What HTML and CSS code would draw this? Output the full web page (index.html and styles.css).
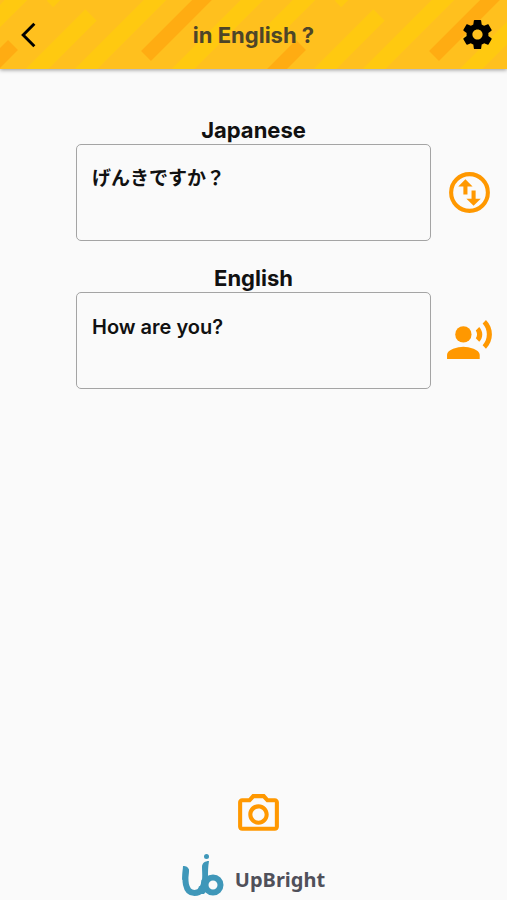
FILE: index.html
```html
<!DOCTYPE html>
<html lang="en">
<head>
<meta charset="utf-8">
<meta name="viewport" content="width=device-width, initial-scale=1">
<title>in English ?</title>
<link rel="stylesheet" href="styles.css">
</head>
<body>
<header class="bar">
  <svg class="bar-pattern" aria-hidden="true">
    <defs>
      <pattern id="stripes" width="288" height="70" patternUnits="userSpaceOnUse">
        <rect width="288" height="70" fill="#ffc01e"/>
        <g stroke="#ffc910" stroke-width="16">
          <path d="M-20 36L22 -6"/>
          <path d="M268 36L310 -6"/>
          <path d="M32 74L91 15"/>
          <path d="M81 74L161 -6"/>
          <path d="M178 74L258 -6"/>
          <path d="M50 4L60 -6" stroke-width="9"/>
        </g>
        <g stroke="#ffac12" stroke-width="14">
          <path d="M-25 83L13 45"/>
          <path d="M263 83L301 45"/>
          <path d="M146 56L210 -8"/>
        </g>
      </pattern>
    </defs>
    <rect width="100%" height="100%" fill="url(#stripes)"/>
  </svg>
  <button class="icon-button" type="button" aria-label="Back">
    <svg class="icon-small" viewBox="0 0 36 36" aria-hidden="true"><path d="M23 7L11.500 18.500L23 30" fill="none" stroke="#000" stroke-width="3"/></svg>
  </button>
  <h1 class="title">in English ?</h1>
  <button class="icon-button" type="button" aria-label="Settings">
    <svg class="icon-small" viewBox="0 0 24 24" aria-hidden="true"><path d="M19.430 12.980c.04-.32.070-.64.070-.98s-.03-.66-.07-.98l2.110-1.650c.19-.15.240-.42.120-.64l-2-3.460c-.12-.22-.39-.3-.61-.22l-2.490 1c-.52-.4-1.080-.73-1.690-.98l-.38-2.650C14.460 2.180 14.250 2 14 2h-4c-.25 0-.46.180-.49.420l-.38 2.650c-.61.250-1.170.590-1.690.980l-2.490-1c-.23-.09-.49 0-.61.220l-2 3.460c-.13.220-.07.490.120.640l2.110 1.650c-.04.320-.07.650-.07.980s.030.660.070.980l-2.110 1.650c-.19.150-.24.420-.12.640l2 3.460c.12.220.390.300.610.220l2.490-1c.52.400 1.080.730 1.690.980l.38 2.650c.03.240.240.420.490.420h4c.25 0 .46-.18.490-.42l.38-2.650c.61-.25 1.170-.59 1.690-.98l2.490 1c.23.090.490 0 .610-.22l2-3.460c.12-.22.070-.49-.12-.64l-2.110-1.650zM12 15.500c-1.930 0-3.500-1.570-3.500-3.500s1.570-3.500 3.500-3.500 3.500 1.570 3.500 3.500-1.570 3.500-3.500 3.500z"/></svg>
  </button>
</header>
<main class="fields">
  <section class="field">
    <label class="field-label" for="source">Japanese</label>
    <textarea class="field-box field-box-ja" id="source" lang="ja">げんきですか？</textarea>
    <button class="field-action" type="button" aria-label="Swap languages">
      <svg class="icon" viewBox="0 0 24 24" aria-hidden="true"><circle cx="12" cy="12" r="9" fill="none" stroke="currentColor" stroke-width="2"/><path d="M6.500 9L10 5.500L13.500 9H11v4H9V9zM17.500 15L14 18.500L10.500 15H13v-4h2v4z"/></svg>
    </button>
  </section>
  <section class="field">
    <label class="field-label" for="target">English</label>
    <textarea class="field-box" id="target">How are you?</textarea>
    <button class="field-action" type="button" aria-label="Read aloud">
      <svg class="icon" viewBox="0 0 24 24" aria-hidden="true"><circle cx="9" cy="9" r="4"/><path d="M9 15c-2.670 0-8 1.340-8 4v2h16v-2c0-2.660-5.330-4-8-4zm7.760-9.640l-1.680 1.690c.84 1.180.840 2.710 0 3.890l1.680 1.690c2.020-2.020 2.020-5.070 0-7.270zM20.070 2l-1.630 1.630c2.770 3.020 2.770 7.560 0 10.740L20.070 16c3.900-3.890 3.910-9.950 0-14z"/></svg>
    </button>
  </section>
</main>
<footer class="footer">
  <button class="camera" type="button" aria-label="Take a photo">
    <svg class="icon" viewBox="0 0 24 24" aria-hidden="true"><path d="M20 4h-3.170L15 2H9L7.170 4H4c-1.100 0-2 .9-2 2v12c0 1.100.900 2 2 2h16c1.100 0 2-.9 2-2V6c0-1.100-.9-2-2-2zm0 14H4V6h4.050l1.830-2h4.240l1.830 2H20v12zM12 7c-2.760 0-5 2.240-5 5s2.240 5 5 5 5-2.240 5-5-2.240-5-5-5zm0 8c-1.650 0-3-1.350-3-3s1.350-3 3-3 3 1.350 3 3-1.350 3-3 3z"/></svg>
  </button>
  <div class="brand">
    <svg class="brand-mark" viewBox="0 0 42 46" aria-hidden="true">
      <g fill="none" stroke="#3f97b9" stroke-width="6">
        <path d="M4 16C3 25 2 40 12.500 40C20 40 22 34 22.500 27"/>
        <circle cx="31" cy="32" r="7.500"/>
      </g>
      <path d="M1 13C4 13 7 14 7 18L6 24L0 27zM20 14C20 10 23 8 27 8C26 14 26 18 26 23L25 32L19 32C21 25 20 20 20 14zM17 33L26 36L22 41L15 41z" fill="#3f97b9"/>
      <circle cx="24.500" cy="3.500" r="2.500" fill="#3f97b9"/>
    </svg>
    <span class="brand-name">UpBright</span>
  </div>
</footer>
</body>
</html>
```

FILE: styles.css
```css
* {
  box-sizing: border-box;
}

body {
  margin: 0;
  min-height: 100vh;
  display: flex;
  flex-direction: column;
  background: #fafafa;
  color: #111;
  font-family: Inter, "Noto Sans CJK JP", sans-serif;
}

button {
  padding: 0;
  border: 0;
  background: none;
  color: #ff9800;
  cursor: pointer;
}

svg {
  display: block;
  fill: currentColor;
}

.bar {
  position: relative;
  display: flex;
  align-items: center;
  justify-content: space-between;
  height: 69px;
  padding: 0 12px;
  background: #ffc01e;
  box-shadow: 0 1px 4px rgba(0, 0, 0, 0.4);
}

.bar-pattern {
  position: absolute;
  inset: 0;
  width: 100%;
  height: 100%;
}

.icon-button {
  position: relative;
  color: #000;
}

.icon-small {
  width: 35px;
  height: 35px;
}

.title {
  position: relative;
  margin: 0;
  color: #4d4528;
  font-size: 22px;
  line-height: 28px;
  font-weight: 700;
}

.fields {
  flex: 1;
  display: flex;
  flex-direction: column;
  gap: 22px;
  padding-top: 46px;
}

.field {
  display: grid;
  grid-template-columns: 76px 1fr 76px;
  align-items: center;
}

.field-label {
  grid-column: 2;
  text-align: center;
  font-size: 22px;
  line-height: 27px;
  padding-top: 2px;
  font-weight: 700;
}

.field-box {
  grid-column: 2;
  display: block;
  width: 100%;
  height: 97px;
  padding: 20px 15px;
  border: 1px solid #a4a4a4;
  border-radius: 5px;
  background: transparent;
  color: inherit;
  font: inherit;
  font-size: 20px;
  line-height: 28px;
  font-weight: 600;
  resize: none;
}

.field-box-ja {
  font-size: 19px;
}

.field-action {
  justify-self: center;
}

.icon {
  width: 49px;
  height: 49px;
}

.footer {
  display: flex;
  flex-direction: column;
  align-items: center;
  gap: 14px;
  padding-bottom: 1px;
}

.camera {
  padding-left: 10px;
}

.brand {
  display: flex;
  align-items: center;
  gap: 11px;
}

.brand-mark {
  width: 42px;
  height: 46px;
}

.brand-name {
  color: #50505a;
  font-family: "Noto Sans", sans-serif;
  font-size: 20px;
  line-height: 28px;
  font-weight: 700;
  padding-top: 8px;
}
```
